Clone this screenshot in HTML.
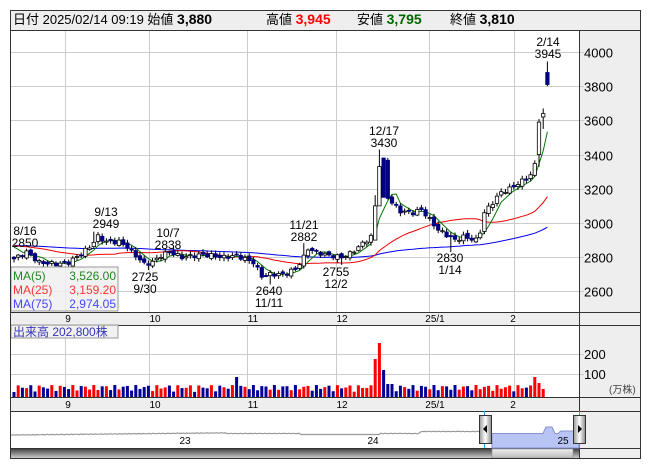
<!DOCTYPE html>
<html><head><meta charset="utf-8">
<style>
html,body{margin:0;padding:0;background:#fff;width:653px;height:470px;overflow:hidden}
svg{display:block;font-family:"Liberation Sans","Noto Sans CJK JP",sans-serif}
</style></head>
<body>
<svg id="s" width="653" height="470" viewBox="0 0 653 470" xmlns="http://www.w3.org/2000/svg"></svg>
<script>
function py(p){return 52+(4000-p)*0.171;}
var keys=[[0,2790],[3,2830],[6,2770],[10,2760],[13,2770],[16,2820],[18,2860],[20,2920],[22,2890],[25,2890],[27,2860],[29,2810],[31,2760],[33,2770],[35,2810],[37,2830],[40,2800],[45,2815],[50,2800],[53,2810],[55,2790],[57,2770],[59,2690],[61,2700],[64,2700],[67,2730],[69,2800],[70,2850],[72,2830],[75,2810],[78,2800],[80,2820],[83,2880],[85,2920],[86,3150],[87,3320],[88,3350],[89,3150],[90,3120],[92,3070],[95,3060],[97,3080],[99,3020],[101,2960],[103,2930],[105,2900],[107,2920],[110,2900],[111,2950],[112,3060],[114,3120],[116,3180],[118,3200],[120,3230],[122,3260],[123,3280],[124,3340],[125,3580],[126,3640],[127,3810]];
var N=128,C=[];
for(var k=0;k<keys.length-1;k++){var a=keys[k],b=keys[k+1];for(var i=a[0];i<b[0];i++){C[i]=a[1]+(b[1]-a[1])*(i-a[0])/(b[0]-a[0]);}}
C[127]=3810;
for(var i=0;i<N;i++){C[i]+=Math.round(Math.sin(i*2.3)*12)}
C[127]=3810;C[126]=3640;C[125]=3590;
var O=[],H=[],L=[];
for(var i=0;i<N;i++){var o=i?C[i-1]+Math.sin(i*1.7)*10:2800;O[i]=o;var hi=Math.max(o,C[i])+6+Math.abs(Math.sin(i*3.1))*14;var lo=Math.min(o,C[i])-6-Math.abs(Math.cos(i*2.7))*14;H[i]=hi;L[i]=lo;}
O[125]=3400;O[126]=3620;H[126]=3670;L[126]=3550;O[127]=3880;H[127]=3945;L[127]=3800;
H[87]=3430;O[87]=3100;C[87]=3330;H[88]=3360;O[88]=3380;C[88]=3150;C[86]=3100;O[86]=2900;H[3]=2850;H[19]=2949;L[32]=2725;H[37]=2838;L[61]=2640;H[69]=2882;L[78]=2755;L[104]=2830;
var pre=[];for(var i=0;i<80;i++)pre.push(2870+Math.sin(i)*15);
var all=pre.concat(C);
function ma(n,i){var s=0;for(var j=0;j<n;j++)s+=all[80+i-j];return s/n;}
function X(i){return 14+i*4.2;}
var s='';
s+='<rect x="10.5" y="10.5" width="630" height="448" fill="#fff" stroke="#333"/>';
s+='<rect x="11" y="11" width="629" height="19" fill="#eeeeee"/>';
s+='<line x1="10" y1="30.5" x2="640" y2="30.5" stroke="#333"/>';
s+='<rect x="579" y="31" width="61" height="281" fill="#eeeeee"/>';
s+='<rect x="579" y="325" width="61" height="72" fill="#eeeeee"/>';
s+='<rect x="579" y="411" width="61" height="47" fill="#eeeeee"/>';
s+='<rect x="11" y="312" width="629" height="13" fill="#eeeeee"/>';
s+='<rect x="11" y="397" width="629" height="14" fill="#eeeeee"/>';
var gx=[65,149,247,336,429,514];
gx.forEach(function(x){s+='<line x1="'+(x+.5)+'" y1="31" x2="'+(x+.5)+'" y2="312" stroke="#ccc"/>';s+='<line x1="'+(x+.5)+'" y1="325" x2="'+(x+.5)+'" y2="397" stroke="#ccc"/>';});
[4000,3800,3600,3400,3200,3000,2800,2600].forEach(function(p){var y=Math.round(py(p))+.5;s+='<line x1="11" y1="'+y+'" x2="584" y2="'+y+'" stroke="#ccc"/>';s+='<text x="584" y="'+(y+5)+'" font-size="13" fill="#000">'+p+'</text>';});
[[354,'200'],[374,'100']].forEach(function(a){s+='<line x1="11" y1="'+(a[0]+.5)+'" x2="584" y2="'+(a[0]+.5)+'" stroke="#ccc"/>';s+='<text x="584" y="'+(a[0]+5)+'" font-size="13">'+a[1]+'</text>';});
s+='<text x="609" y="393" font-size="10" fill="#444">(万株)</text>';
s+='<line x1="579.5" y1="31" x2="579.5" y2="458" stroke="#333"/>';
[312,325,397,411,448].forEach(function(y){s+='<line x1="10" y1="'+(y+.5)+'" x2="640" y2="'+(y+.5)+'" stroke="#333"/>';});
var ml=[[68,'9'],[155,'10'],[253,'11'],[342,'12'],[435,'25/1'],[513,'2']];
ml.forEach(function(m){s+='<text x="'+m[0]+'" y="322" font-size="10" text-anchor="middle">'+m[1]+'</text>';s+='<text x="'+m[0]+'" y="408" font-size="10" text-anchor="middle">'+m[1]+'</text>';});
[[75,'#0000ee'],[25,'#ee0000'],[5,'#007700']].forEach(function(m){var d='';for(var i=0;i<N;i++){d+=(i?'L':'M')+X(i).toFixed(1)+' '+py(ma(m[0],i)).toFixed(1);}s+='<path d="'+d+'" fill="none" stroke="'+m[1]+'" stroke-width="1"/>';});
for(var i=0;i<N;i++){var x=X(i),up=C[i]>=O[i];var t=py(Math.max(O[i],C[i])),b=py(Math.min(O[i],C[i]));if(b-t<1)b=t+1;
s+='<line x1="'+x+'" y1="'+py(H[i])+'" x2="'+x+'" y2="'+py(L[i])+'" stroke="#000" stroke-width="1"/>';
s+='<rect x="'+(x-1.7)+'" y="'+t+'" width="3.4" height="'+(b-t)+'" fill="'+(up?'#fff':'#000080')+'" stroke="'+(up?'#000':'#000080')+'" stroke-width="0.8"/>';}
for(var i=0;i<N;i++){var h=5+Math.abs(Math.sin(i*1.9))*7;if(i==87)h=54;if(i==86)h=38;if(i==88)h=27;if(i==89||i==90)h=13;if(i==53)h=20;if(i==124)h=20;if(i==125)h=14;if(i==126)h=8;if(i==127)h=0;
var up=C[i]>=O[i];if(i==86||i==87||i==124||i==125)up=true;if(i==88||i==53)up=false;
s+='<rect x="'+(X(i)-1.5)+'" y="'+(397-h)+'" width="3" height="'+h+'" fill="'+(up?'#ff0000':'#000099')+'"/>';}
function ann(x,y,a,b){s+='<text x="'+x+'" y="'+y+'" font-size="12" text-anchor="middle">'+a+'</text><text x="'+x+'" y="'+(y+12)+'" font-size="12" text-anchor="middle">'+b+'</text>';}
ann(25,235,'8/16','2850');ann(106,216,'9/13','2949');ann(168,237,'10/7','2838');ann(145,281,'2725','9/30');ann(269,295,'2640','11/11');ann(304,229,'11/21','2882');ann(336,276,'2755','12/2');ann(384,135,'12/17','3430');ann(450,262,'2830','1/14');ann(548,46,'2/14','3945');
s+='<rect x="11" y="267" width="107" height="44" fill="rgba(240,240,240,0.85)" stroke="#999"/>';
s+='<text x="13" y="280" font-size="12" fill="#228822">MA(5)</text><text x="116" y="280" font-size="12" fill="#228822" text-anchor="end">3,526.00</text>';
s+='<text x="13" y="294" font-size="12" fill="#ff3333">MA(25)</text><text x="116" y="294" font-size="12" fill="#ff3333" text-anchor="end">3,159.20</text>';
s+='<text x="13" y="308" font-size="12" fill="#4444ff">MA(75)</text><text x="116" y="308" font-size="12" fill="#4444ff" text-anchor="end">2,974.05</text>';
s+='<rect x="11" y="325" width="107" height="13" fill="rgba(240,240,240,0.9)" stroke="#999"/>';
s+='<text x="13" y="336" font-size="12" fill="#3333bb">出来高  202,800株</text>';
var nl='';for(var x=11;x<=492;x+=2){var y=435-(x-11)*0.01+Math.sin(x*1.3)*0.3;if(x>225)y=433.5+Math.sin(x*1.3)*0.3;if(x>300&&x<380)y=434.5;if(x>420)y=431.5+Math.sin(x*1.3)*0.3;nl+=(x==11?'M':'L')+x+' '+y.toFixed(1);}
s+='<path d="'+nl+'" fill="none" stroke="#999" stroke-width="1.2"/>';
var fl='M492 448';for(var x=492;x<=579;x+=3){var y=433.5;if(x>=546&&x<=553)y=427;if(x>560)y=431;fl+='L'+x+' '+y.toFixed(1);}fl+='L579 448Z';
s+='<path d="'+fl+'" fill="#b8c4f4" stroke="#8890d0"/>';
s+='<text x="185" y="444" font-size="10" text-anchor="middle">23</text><text x="373" y="444" font-size="10" text-anchor="middle">24</text><text x="563" y="444" font-size="10" text-anchor="middle">25</text>';
s+='<line x1="484.5" y1="411" x2="484.5" y2="448" stroke="#29a3d6"/><line x1="579.5" y1="411" x2="579.5" y2="448" stroke="#29a3d6"/>';
s+='<defs><linearGradient id="g" x1="0" y1="0" x2="1" y2="0"><stop offset="0" stop-color="#999"/><stop offset=".5" stop-color="#fff"/><stop offset="1" stop-color="#888"/></linearGradient><linearGradient id="sb" x1="0" y1="0" x2="0" y2="1"><stop offset="0" stop-color="#444"/><stop offset="1" stop-color="#ccc"/></linearGradient><linearGradient id="th" x1="0" y1="0" x2="0" y2="1"><stop offset="0" stop-color="#eee"/><stop offset="1" stop-color="#bbb"/></linearGradient></defs>';
s+='<rect x="479.5" y="415.5" width="12" height="28" fill="url(#g)" stroke="#333"/><path d="M483 429 L487 425 L487 433Z" fill="#000"/>';
s+='<rect x="573.5" y="415.5" width="12" height="28" fill="url(#g)" stroke="#333"/><path d="M582 429 L578 425 L578 433Z" fill="#000"/>';
s+='<rect x="11" y="449" width="568" height="9" fill="url(#sb)"/><rect x="492" y="449" width="81" height="9" fill="url(#th)" stroke="#888" stroke-width=".5"/>';
s+='<text x="13" y="24" font-size="13">日付 2025/02/14 09:19 始値 <tspan font-weight="bold" font-size="14">3,880</tspan></text>';
s+='<text x="266" y="24" font-size="13">高値 <tspan font-weight="bold" font-size="14" fill="#ff0000">3,945</tspan></text>';
s+='<text x="357" y="24" font-size="13">安値 <tspan font-weight="bold" font-size="14" fill="#006600">3,795</tspan></text>';
s+='<text x="450" y="24" font-size="13">終値 <tspan font-weight="bold" font-size="14">3,810</tspan></text>';
s+='<rect x="10.5" y="10.5" width="630" height="448" fill="none" stroke="#333"/>';
document.getElementById('s').innerHTML=s;
</script>
</body></html>
